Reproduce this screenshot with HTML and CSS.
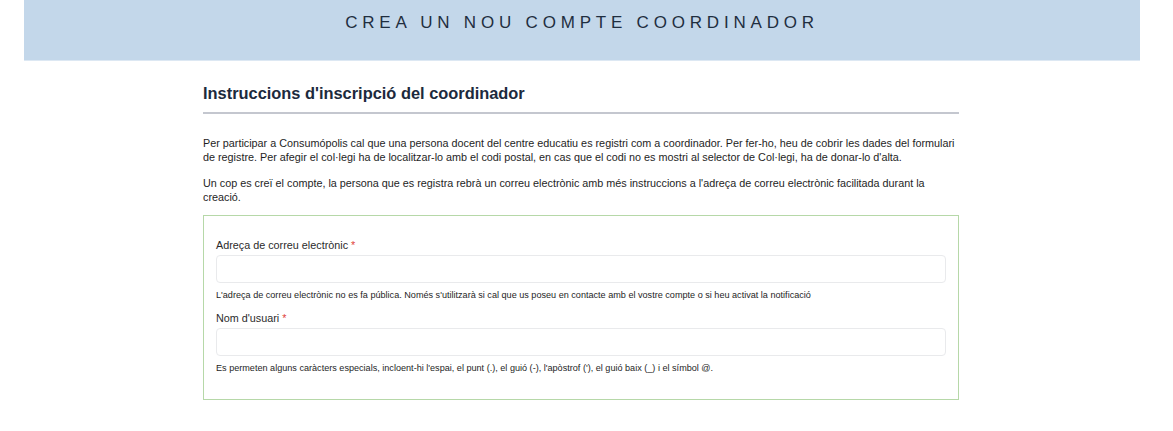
FILE: index.html
```html
<!DOCTYPE html>
<html>
  <head>
    <title>Crea un nou compte coordinador</title>
    <link rel="stylesheet" href="styles.css">
  </head>
  <body>
    <div class="page-header">
      <h1>Crea un nou compte coordinador</h1>
    </div>

    <div class="content">
      <h2>Instruccions d'inscripció del coordinador</h2>

      <p>Per participar a Consumópolis cal que una persona docent del centre educatiu es registri com a coordinador. Per fer-ho, heu de cobrir les dades del formulari de registre. Per afegir el col·legi ha de localitzar-lo amb el codi postal, en cas que el codi no es mostri al selector de Col·legi, ha de donar-lo d'alta.</p>
      <p>Un cop es creï el compte, la persona que es registra rebrà un correu electrònic amb més instruccions a l'adreça de correu electrònic facilitada durant la creació.</p>

      <form class="register-form">
        <div class="form-item">
          <label for="mail">Adreça de correu electrònic <span class="required">*</span></label>
          <input type="email" id="mail" name="mail">
          <div class="description">L'adreça de correu electrònic no es fa pública. Només s'utilitzarà si cal que us poseu en contacte amb el vostre compte o si heu activat la notificació</div>
        </div>
        <div class="form-item">
          <label for="name">Nom d'usuari <span class="required">*</span></label>
          <input type="text" id="name" name="name">
          <div class="description">Es permeten alguns caràcters especials, incloent-hi l'espai, el punt (.), el guió (-), l'apòstrof ('), el guió baix (_) i el símbol @.</div>
        </div>
      </form>
    </div>
  </body>
</html>
```

FILE: styles.css
```css
body {
  margin: 0;
  background: #fff;
  font-family: "Liberation Sans", Arial, sans-serif;
  color: #222;
}

.page-header {
  margin: 0 33px 0 24px;
  height: 60px;
  background-color: #c3d7ea;
  border-bottom: 1px solid #dde8f3;
}

.page-header h1 {
  margin: 0;
  padding-top: 12px;
  text-align: center;
  font-size: 17px;
  font-weight: normal;
  letter-spacing: 4.8px;
  text-transform: uppercase;
  color: #1f2e40;
  line-height: 22px;
}

.content {
  width: 756px;
  margin: 0 0 0 203px;
}

h2 {
  margin: 22px 0 0;
  padding-bottom: 9px;
  font-size: 16.4px;
  line-height: 20px;
  font-weight: bold;
  color: #1c2a3d;
  border-bottom: 2px solid #c4c7cf;
}

p {
  margin: 22px 0 0;
  font-size: 10.8px;
  line-height: 14px;
  color: #1e1e1e;
}

p + p {
  margin-top: 12px;
}

.register-form {
  margin-top: 11px;
  padding: 22px 12px 25px;
  border: 1px solid #b6d8a8;
}

.form-item + .form-item {
  margin-top: 10px;
}

label {
  display: block;
  font-size: 10.8px;
  line-height: 14px;
  color: #2b2b2b;
  margin-bottom: 3px;
}

.required {
  color: #e0413a;
}

input {
  display: block;
  box-sizing: border-box;
  width: 100%;
  height: 28px;
  margin: 0;
  border: 1px solid #e9eaec;
  border-radius: 4px;
  background: #fff;
}

.description {
  margin-top: 6px;
  font-size: 9.1px;
  line-height: 12px;
  color: #1e1e1e;
}
```
